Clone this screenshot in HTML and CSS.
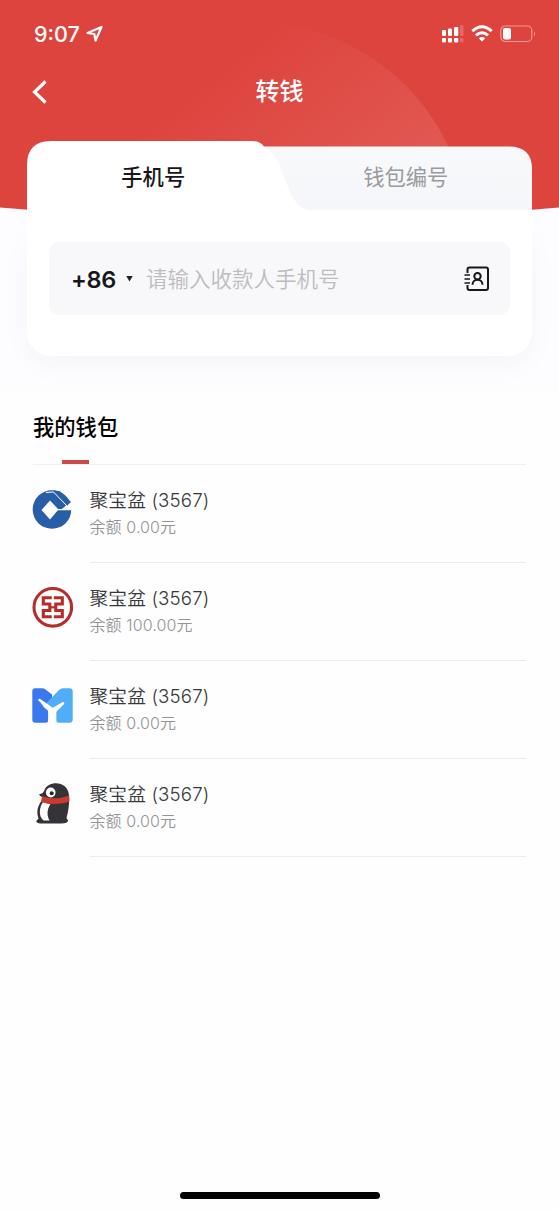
FILE: index.html
```html
<!DOCTYPE html>
<html lang="zh-CN">
<head>
<meta charset="utf-8">
<title>转钱</title>
<link rel="stylesheet" href="styles.css">
</head>
<body>
<div class="screen">
  <svg class="hero" width="559" height="214" viewBox="0 0 559 214">
    <defs>
      <linearGradient id="glow" gradientUnits="userSpaceOnUse" x1="270" y1="30" x2="400" y2="190">
        <stop offset="0" stop-color="#fff" stop-opacity="0"/>
        <stop offset="1" stop-color="#fff" stop-opacity="0.11"/>
      </linearGradient>
      <clipPath id="heroClip"><path d="M0 0H559V207.500Q280 232 0 207.500Z"/></clipPath>
    </defs>
    <g clip-path="url(#heroClip)">
      <rect width="559" height="240" fill="#de443e"/>
      <circle cx="255" cy="236" r="213" fill="url(#glow)"/>
    </g>
  </svg>

  <header class="status">
    <div class="clock">
      <span>9:07</span>
      <svg width="18" height="18" viewBox="0 0 18 18"><path d="M1.500 8L15.500 2L9.500 15.500L8.300 9Z" fill="none" stroke="#fff" stroke-width="2.200" stroke-linejoin="round"/></svg>
    </div>
    <div class="indicators">
      <svg width="22" height="18" viewBox="0 0 22 18" fill="#fff">
        <rect y="5" width="4" height="6" rx="1"/><rect x="6" y="3.500" width="4" height="7.500" rx="1"/><rect x="12" y="2" width="4.300" height="9" rx="1"/>
        <rect y="13" width="4" height="4.500" rx="1"/><rect x="6" y="13" width="4" height="4.500" rx="1"/><rect x="12" y="13" width="4.300" height="4.500" rx="1"/>
        <g opacity=".2"><rect x="18" width="3.500" height="11" rx="1"/><rect x="18" y="13" width="3.500" height="4.500" rx="1"/></g>
      </svg>
      <svg width="22" height="17" viewBox="0 0 22 17" fill="none" stroke="#fff" stroke-width="3">
        <path d="M1.300 6.200Q11-2.600 20.700 6.200"/><path d="M5 10.400Q11 5 17 10.400"/><path d="M11 16.500L7.800 13.300Q11 10.600 14.200 13.300Z" fill="#fff" stroke="none"/>
      </svg>
      <svg width="36" height="18" viewBox="0 0 36 18">
        <rect x=".8" y="1" width="31" height="15.500" rx="4.500" fill="none" stroke="#f09a94" stroke-width="1.200"/>
        <rect x="3" y="3" width="8" height="11.500" rx="2" fill="#fff"/><path d="M34 6.500Q36 9 34 11.500Z" fill="#f09a94"/>
      </svg>
    </div>
  </header>

  <nav class="navbar">
    <svg width="16" height="26" viewBox="0 0 16 26"><path d="M14.500 2.500L3.500 13L14.500 23.500" fill="none" stroke="#fff" stroke-width="3.200"/></svg>
    <h1>转钱</h1>
  </nav>

  <main>
    <section class="card">
      <svg class="tab-shape" width="505" height="70" viewBox="0 0 505 70">
        <defs><linearGradient id="tabFade" x1="0" y1="0" x2="0" y2="1"><stop offset="0" stop-color="#f8f9fb"/><stop offset="1" stop-color="#f5f6f9"/></linearGradient></defs>
        <path d="M225 5.500H482Q505 5.500 505 28V69H225Z" fill="url(#tabFade)"/>
        <path d="M0 70V24Q0 0 24 0H225Q233 0 237 5.500C249 12 252 24 257 36C264 53 268 69 286 69V70Z" fill="#fff"/>
      </svg>
      <div class="tabs">
        <div class="tab active">手机号</div>
        <div class="tab">钱包编号</div>
      </div>
      <div class="panel">
        <div class="field">
          <span class="prefix">+86</span>
          <svg class="caret" width="7" height="6" viewBox="0 0 7 6"><path d="M.3 0H6.700L3.500 5.500Z" fill="#222"/></svg>
          <span class="placeholder">请输入收款人手机号</span>
          <svg width="26" height="26" viewBox="0 0 26 26" fill="none" stroke="#17171b" stroke-width="2">
            <path d="M3.500 7V3.500Q3.500 1.500 5.500 1.500H22Q24 1.500 24 3.500V22Q24 24 22 24H5.500Q3.500 24 3.500 22V19"/>
            <path d="M.5 9H6M.5 13H6M.5 17H6" stroke-width="1.600"/>
            <circle cx="13.500" cy="10.300" r="3.200"/><path d="M8.500 18.800C8.500 12 18.500 12 18.500 18.800"/>
          </svg>
        </div>
      </div>
    </section>

    <section class="wallets">
      <h2>我的钱包</h2>
      <ul>
        <li>
          <svg class="logo" width="42" height="42" viewBox="0 0 42 42">
            <circle cx="20" cy="21.500" r="19.300" fill="#275ea7"/>
            <path d="M26 21L30 21L34.500 17L42 10V22.300H25Z" fill="#fff"/>
            <path d="M18 12.500L26.500 21.600L18 31.500L9.500 22Z" fill="#fff"/>
            <path d="M22 2.600L28 3.200L39 14L34.800 18L20 4Z" fill="#275ea7"/>
            <path d="M14 4.500L21.500 4L35 18" fill="none" stroke="#fff" stroke-width="1"/>
          </svg>
          <div class="info"><p class="name">聚宝盆 (3567)</p><p class="balance">余额 0.00元</p></div>
        </li>
        <li>
          <svg class="logo" width="42" height="42" viewBox="0 0 42 42" fill="none" stroke="#b62c2b">
            <circle cx="20.800" cy="21.300" r="18.800" stroke-width="3.100"/>
            <path d="M19.800 11.700H11.300V18H17.800V24.500H11.300V30.800H19.800M21.800 11.700H30.300V18H23.800V24.500H30.300V30.800H21.800" stroke-width="3.100"/>
            <path d="M17.800 21.300H23.800" stroke-width="2.200"/>
          </svg>
          <div class="info"><p class="name">聚宝盆 (3567)</p><p class="balance">余额 100.00元</p></div>
        </li>
        <li>
          <svg class="logo" width="42" height="42" viewBox="0 0 42 42">
            <path d="M3.500 4.300H10Q12 4.300 13.500 5.500L20 10.500V25L16.300 27V36Q16.300 38.700 13.500 38.700H3.500Q.3 38.700 .3 35.500V7.500Q.3 4.300 3.500 4.300Z" fill="#3a78f0"/>
            <path d="M14 19.500L27 6Q28.700 4.300 31 4.300H37.500Q40.700 4.300 40.700 7.500V35.500Q40.700 38.700 37.500 38.700H27Q24.200 38.700 24.200 36V26L19 24Z" fill="#50aef8"/>
            <path d="M7.500 16L14 20.500L20.500 25.300L31 19.300L23 27" fill="none" stroke="#fff" stroke-width="2.600" stroke-linejoin="round" stroke-linecap="round"/>
            <path d="M7.500 17L14 20L20.500 24.500L30 20Q27.500 25 24.200 27.500V39H16.300V27Q11 23 7.500 17Z" fill="#fff"/>
          </svg>
          <div class="info"><p class="name">聚宝盆 (3567)</p><p class="balance">余额 0.00元</p></div>
        </li>
        <li>
          <svg class="logo" width="42" height="42" viewBox="0 0 42 42">
            <path d="M7 12.500Q11.500 11.500 12.500 8C16-1.500 36.500-2 37 14C37.500 21 36.500 29 34.500 36L36 38.500Q36.500 41.300 29 41.500H11Q4 41.500 4.300 39L6.500 36.500C3.500 29 7 22 10 18L10.500 15Q8 14.500 7 12.500Z" fill="#343338"/>
            <ellipse cx="18.700" cy="10.500" rx="4.800" ry="5" fill="#fff"/><circle cx="19.700" cy="11.300" r="2" fill="#26252a"/>
            <path d="M11 20Q16 22 18.500 22C14.500 28 15 34 17.500 38.500H11.500C6 34 7.500 25 11 20Z" fill="#fff"/>
            <path d="M10 14.300Q24 18.500 37.200 13.500L37.500 19.300Q34 21 29 21.500Q18 23 9 19.800Z" fill="#c93a2f"/>
          </svg>
          <div class="info"><p class="name">聚宝盆 (3567)</p><p class="balance">余额 0.00元</p></div>
        </li>
      </ul>
    </section>
  </main>
  <div class="home-bar"></div>
</div>
</body>
</html>
```
FILE: styles.css
```css
* { box-sizing: border-box; margin: 0; padding: 0; }
body {
  font-family: Inter, "Noto Sans CJK SC", sans-serif;
  background: #fdfdfe;
  color: #17171b;
}
.screen {
  position: relative;
  display: flex;
  flex-direction: column;
  height: 1210px;
  overflow: hidden;
  background: linear-gradient(#fdfcff 0, #fdfcff 350px, #fefefe 410px);
}
.hero { position: absolute; top: 0; left: 0; }
svg { display: block; flex: none; }
.status, .navbar, main { position: relative; }
main { z-index: 0; }

.status {
  display: flex;
  justify-content: space-between;
  align-items: center;
  height: 67px;
  padding: 0 23px 0 34px;
  color: #fff;
}
.clock { display: flex; align-items: center; gap: 6px; font-size: 21.5px; font-weight: 500; }
.indicators { display: flex; align-items: center; gap: 7px; }

.navbar {
  display: flex;
  align-items: center;
  height: 50px;
  padding: 0 32px 0 31px;
  color: #fff;
}
.navbar h1 { flex: 1; padding-right: 15px; text-align: center; font-size: 24px; line-height: 50px; font-weight: 500; }

.card {
  position: relative;
  height: 215px;
  margin: 24px 27px 0;
  border-radius: 24px;
  background: linear-gradient(transparent 69px, #fff 69px);
}
.card::before {
  content: "";
  position: absolute;
  z-index: -1;
  inset: 90px 0 0;
  border-radius: 0 0 24px 24px;
  box-shadow: 0 10px 28px rgba(70, 60, 90, .04);
}
.tab-shape { position: absolute; top: 0; left: 0; }
.tabs { position: relative; display: flex; height: 70px; }
.tab { flex: 1; font-size: 21.3px; line-height: 72px; text-align: center; color: #999a9d; }
.tab.active { color: #17171b; font-weight: 500; }
.panel { position: relative; padding: 31px 22px 0; }
.field {
  display: flex;
  align-items: center;
  height: 73px;
  padding: 0 20px 0 22px;
  border-radius: 10px;
  background: #f8f7fa;
}
.prefix { width: 45px; padding-top: 1px; font-size: 23.5px; font-weight: 600; letter-spacing: -.3px; white-space: nowrap; }
.caret { margin: 0 13px 0 10px; }
.placeholder { flex: 1; padding-top: 1px; font-size: 21.5px; line-height: 32px; color: #bcbcbf; font-weight: 350; }

.wallets { padding: 52px 33px 0; }
.wallets h2 {
  position: relative;
  height: 57px;
  border-bottom: 1px solid #f0f0f2;
  font-size: 21.3px;
  line-height: 38px;
  font-weight: 500;
  color: #000;
}
.wallets h2::after {
  content: "";
  position: absolute;
  left: 29px;
  bottom: 0;
  width: 27px;
  height: 4px;
  background: #cb4a49;
}
.wallets ul { list-style: none; }
.wallets li { display: flex; gap: 15.5px; height: 98px; margin-left: -1px; }
.logo { margin-top: 23px; }
.info { flex: 1; padding-top: 21px; border-bottom: 1px solid #ececef; }
.name { font-size: 18.7px; line-height: 29px; font-weight: 350; letter-spacing: .15px; color: #38383c; }
.balance { font-size: 16px; line-height: 25px; font-weight: 350; letter-spacing: .1px; color: #949498; }

.home-bar {
  width: 200px;
  height: 7px;
  margin: auto auto 11px;
  border-radius: 4px;
  background: #000;
}
```
